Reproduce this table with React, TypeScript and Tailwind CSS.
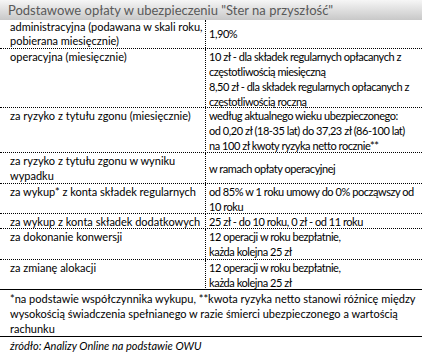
import React from 'react';

const rows: { left: React.ReactNode; right: React.ReactNode; h: string }[] = [
  {
    left: <>administracyjna (podawana w skali roku,<br />pobierana miesięcznie)</>,
    right: <>1,90%</>,
    h: 'h-[29px] leading-[14px]',
  },
  {
    left: <>operacyjna (miesięcznie)</>,
    right: (
      <>
        10 zł - dla składek regularnych opłacanych z<br />
        częstotliwością miesięczną<br />
        8,50 zł - dla składek regularnych opłacanych z<br />
        częstotliwością roczną
      </>
    ),
    h: 'h-[59px]',
  },
  {
    left: <>za ryzyko z tytułu zgonu (miesięcznie)</>,
    right: (
      <>
        według aktualnego wieku ubezpieczonego:<br />
        od 0,20 zł (18-35 lat) do 37,23 zł (86-100 lat)<br />
        na 100 zł kwoty ryzyka netto rocznie**
      </>
    ),
    h: 'h-[45px]',
  },
  {
    left: <>za ryzyko z tytułu zgonu w wyniku<br />wypadku</>,
    right: <>w ramach opłaty operacyjnej</>,
    h: 'h-[31px]',
  },
  {
    left: <>za wykup* z konta składek regularnych</>,
    right: <>od 85% w 1 roku umowy do 0% począwszy od<br />10 roku</>,
    h: 'h-[30px]',
  },
  {
    left: <>za wykup z konta składek dodatkowych</>,
    right: <>25 zł - do 10 roku, 0 zł - od 11 roku</>,
    h: 'h-[15px]',
  },
  {
    left: <>za dokonanie konwersji</>,
    right: <>12 operacji w roku bezpłatnie,<br />każda kolejna 25 zł</>,
    h: 'h-[31px]',
  },
  {
    left: <>za zmianę alokacji</>,
    right: <>12 operacji w roku bezpłatnie,<br />każda kolejna 25 zł</>,
    h: 'h-[29px]',
  },
];

export default function App() {
  return (
    <div className="w-[422px] h-[362px] bg-white text-black font-['Lato','Liberation_Sans',sans-serif] text-[11px] leading-[15px]">
      <div className="h-[20px] bg-gradient-to-b from-[#f6f6f6] to-[#c8c8c8] pl-[8px] text-[13px] leading-[20px] text-[#595959]">
        Podstawowe opłaty w ubezpieczeniu "Ster na przyszłość"
      </div>

      <div className="border-b border-black">
        {rows.map((r, i) => (
          <div
            key={i}
            className={`grid grid-cols-[206px_1fr] whitespace-nowrap ${r.h} ${i < rows.length - 1 ? 'border-b border-dotted border-black' : ''}`}
          >
            <div className="pl-[10px] border-r border-dotted border-black">{r.left}</div>
            <div className="pl-[3px] flex flex-col justify-center tracking-[-0.45px]">
              <div>{r.right}</div>
            </div>
          </div>
        ))}
      </div>

      <div className="h-[47px] pl-[10px] pt-[1px] border-b border-black whitespace-nowrap">
        *na podstawie współczynnika wykupu, **kwota ryzyka netto stanowi różnicę między<br />
        wysokością świadczenia spełnianego w razie śmierci ubezpieczonego a wartością<br />
        rachunku
      </div>

      <div className="pl-[10px] pt-[2px] italic text-[11px] leading-[14px] whitespace-nowrap">
        źródło: Analizy Online na podstawie OWU
      </div>
    </div>
  );
}
